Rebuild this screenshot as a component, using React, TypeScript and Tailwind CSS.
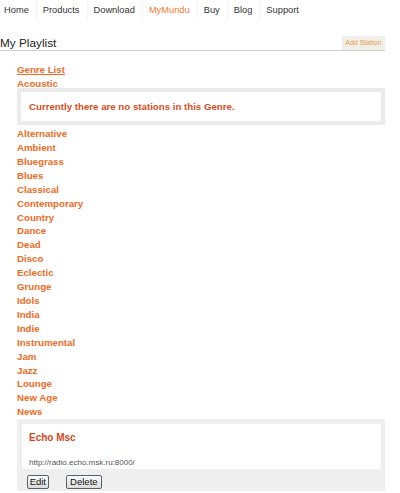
const genres = [
  "Alternative",
  "Ambient",
  "Bluegrass",
  "Blues",
  "Classical",
  "Contemporary",
  "Country",
  "Dance",
  "Dead",
  "Disco",
  "Eclectic",
  "Grunge",
  "Idols",
  "India",
  "Indie",
  "Instrumental",
  "Jam",
  "Jazz",
  "Lounge",
  "New Age",
  "News",
];

const nav = ["Home", "Products", "Download", "MyMundu", "Buy", "Blog", "Support"];

export default function App() {
  return (
    <div className="w-[400px] h-[493px] bg-white overflow-hidden font-['Liberation_Sans',Arial,sans-serif]">
      <nav className="flex h-[20px] text-[9.3px] leading-[20px] text-[#333]">
        {nav.map((n, i) => (
          <div
            key={n}
            className={`${i === 0 ? "pl-[4px]" : "pl-[6px] border-l border-[#f3f3f3]"} pr-[7px] ${
              n === "MyMundu" ? "text-[#f07a30]" : ""
            }`}
          >
            {n}
          </div>
        ))}
      </nav>

      <div className="mt-[16px] w-[385px] h-[15px] flex items-end justify-between border-b border-[#cfcfcf]">
        <div className="text-[11.8px] leading-[14px] text-[#222]">My Playlist</div>
        <div className="h-[14px] px-[3.5px] bg-[#f1eee9] text-[7px] leading-[14px] text-[#e0a045]">
          Add Station
        </div>
      </div>

      <div className="w-[385px] pl-[17px] text-[9.7px] font-bold text-[#ef6a22]">
        <div className="mt-[12px] h-[14px] leading-[14px] underline">Genre List</div>
        <div className="leading-[13.9px]">Acoustic</div>
        <div className="-mt-[2.5px] h-[37px] border-[4px] border-[#ebebeb] pl-[8px]">
          <div className="leading-[29px] text-[#d94d1c]">Currently there are no stations in this Genre.</div>
        </div>
        <div className="pt-[1.7px]">
          {genres.map((g) => (
            <div key={g} className="leading-[13.9px]">
              {g}
            </div>
          ))}
        </div>

        <div className="bg-[#efefef] pt-[4.7px] pl-[4.7px] pr-[4px] pb-[1.2px] font-normal">
          <div className="h-[45.6px] bg-white pl-[7.3px] pt-[7.5px]">
            <div className="text-[10px] font-bold leading-[14px] text-[#d4471c]">Echo Msc</div>
            <div className="mt-[12.3px] text-[8px] leading-[10px] text-[#555]">http://radio.echo.msk.ru:8000/</div>
          </div>
          <div className="flex gap-[17px] pt-[5.7px] pl-[5px]">
            <div className="w-[22.3px] h-[14.3px] flex items-center justify-center border border-[#56606c] rounded-[2px] bg-linear-to-b from-[#fbfbfb] to-[#dcdcdc] text-[9.5px] text-[#111]">
              Edit
            </div>
            <div className="w-[35.7px] h-[14.3px] flex items-center justify-center border border-[#56606c] rounded-[2px] bg-linear-to-b from-[#fbfbfb] to-[#dcdcdc] text-[9.5px] text-[#111]">
              Delete
            </div>
          </div>
        </div>
      </div>
    </div>
  );
}
